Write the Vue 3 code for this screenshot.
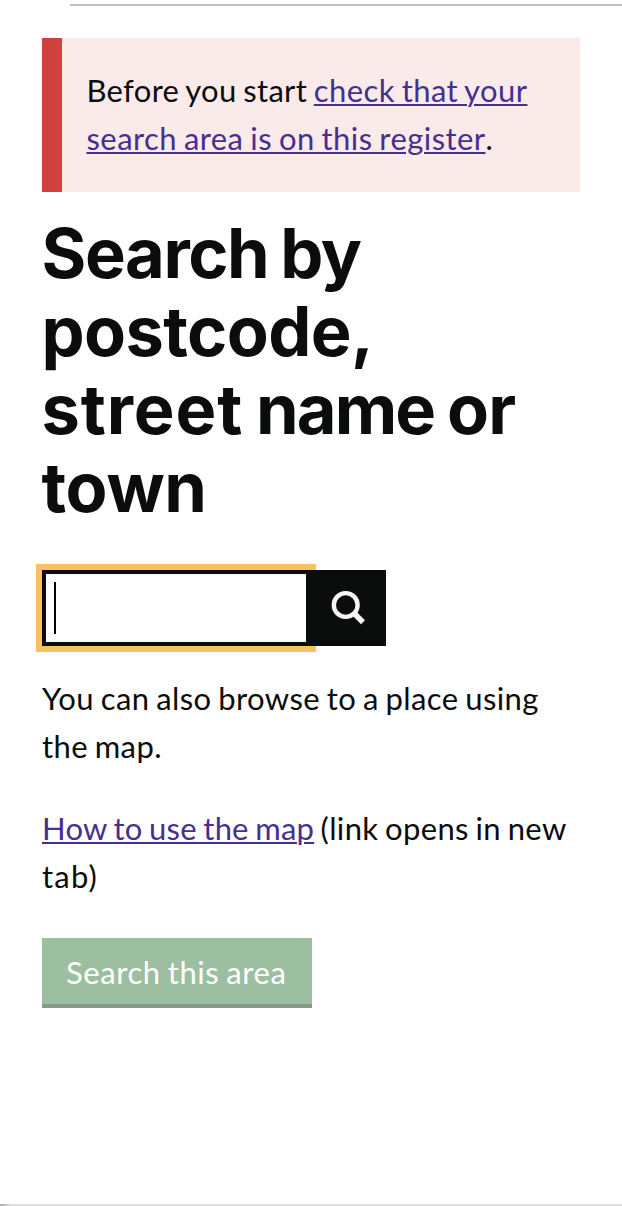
<script setup>
import { ref } from 'vue'
const query = ref('')
</script>

<template>
  <main class="page">
    <hr class="rule-top" />
    <div class="notice">
      <p class="text">
        <span class="l0">Before you start </span><a class="link" href="#"><span class="l1">check that your</span><br /><span class="l2">search area is on this register</span></a>.
      </p>
    </div>
    <h1 class="title">
      <span class="line t1">Search by</span>
      <span class="line t2">postcode,</span>
      <span class="line t3"><span class="wide">street</span> <span class="tight">name</span> or</span>
      <span class="line t4">town</span>
    </h1>
    <form class="search" @submit.prevent>
      <div class="field">
        <input v-model="query" class="input" type="text" aria-label="Search" />
        <span class="caret"></span>
      </div>
      <button class="go" type="submit" aria-label="Submit search">
        <svg width="40" height="40" viewBox="0 0 40 40" fill="none" stroke="#f4f5f5">
          <circle cx="17.7" cy="17" r="11.9" stroke-width="4.4" />
          <path d="M26.3 25.6 35 34.2" stroke-width="5.6" />
        </svg>
      </button>
    </form>
    <p class="text browse"><span class="l3">You can also browse to a place using</span><br /><span class="l3">the map.</span></p>
    <p class="text help"><a class="link l4" href="#">How to use the map</a> <span class="l5">(link opens in new</span><br /><span class="l6">tab)</span></p>
    <button class="area" type="button">Search this area</button>
    <div class="rule-bottom"></div>
  </main>
</template>

<style>
body { background: #fff; }
</style>

<style scoped>
.page {
  box-sizing: border-box;
  display: flex;
  flex-direction: column;
  width: 622px;
  height: 1206px;
  padding: 4px 42px 0;
  overflow: hidden;
  color: #0b0c0c;
  font-family: Lato, "Open Sans", sans-serif;
}
.rule-top {
  flex: none;
  width: 552px;
  height: 2px;
  margin: 0 0 32px 28px;
  border: 0;
  background: #bfbfbf;
}
.notice {
  box-sizing: border-box;
  height: 154px;
  padding: 28px 0 30px 25px;
  border-left: 20px solid #d0403c;
  background: #faebea;
}
.text {
  margin: 0;
  font-size: 31px;
  line-height: 48px;
  white-space: nowrap;
  word-spacing: -1.5px;
}
.notice .text { margin-left: -0.5px; }
.link {
  color: #472f91;
  text-decoration: underline;
  text-decoration-thickness: 2px;
  text-underline-offset: 2px;
}
.l0 { letter-spacing: 0.3px; }
.l1 { letter-spacing: 0.4px; }
.l2 { letter-spacing: 0.43px; }
.l3 { letter-spacing: 0.38px; }
.l4 { letter-spacing: 0.19px; }
.l5 { letter-spacing: 0.33px; }
.l6 { letter-spacing: 1.2px; }
.title {
  margin: 23px 0 0 -0.5px;
  font-family: Inter, sans-serif;
  font-size: 68.5px;
  font-weight: 700;
  line-height: 78px;
  white-space: nowrap;
}
.line { display: block; }
.t1 { letter-spacing: -1.4px; word-spacing: -3px; }
.t2 { letter-spacing: -0.6px; }
.t3 { letter-spacing: -0.9px; word-spacing: -2.5px; }
.wide { letter-spacing: 0.9px; }
.tight { letter-spacing: -1.9px; }
.t4 { letter-spacing: -0.3px; }
.search {
  display: flex;
  height: 76px;
  margin-top: 43px;
}
.field { position: relative; width: 268px; }
.input {
  box-sizing: border-box;
  width: 268px;
  height: 76px;
  padding: 0 8px;
  border: 4px solid #0b0c0c;
  border-radius: 0;
  outline: 6px solid #f6c15f;
  background: #fff;
  font: inherit;
  font-size: 31px;
}
.caret {
  position: absolute;
  top: 12px;
  left: 12px;
  width: 2px;
  height: 52px;
  background: #000;
}
.go {
  position: relative;
  display: flex;
  align-items: center;
  justify-content: center;
  width: 76px;
  height: 76px;
  padding: 0;
  border: 0;
  background: #0b0c0c;
}
.browse { margin-top: 28px; }
.help { margin-top: 34px; }
.area {
  box-sizing: border-box;
  width: 270px;
  height: 70px;
  margin-top: 38px;
  padding: 2px 0 0 24px;
  border: 0;
  border-bottom: 4px solid #8a9b8e;
  background: #9cbfa2;
  color: #fff;
  font-family: inherit;
  font-size: 31px;
  letter-spacing: 0.58px;
  word-spacing: -1.5px;
  text-align: left;
}
.rule-bottom {
  height: 2px;
  margin: auto -42px 0;
  background: linear-gradient(90deg, #a9aeb0 0, #b3b8ba 4px, #dedede 10px);
}
</style>
